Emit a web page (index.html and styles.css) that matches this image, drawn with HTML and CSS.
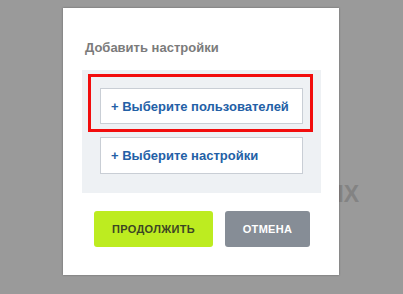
FILE: index.html
```html
<!DOCTYPE html>
<html lang="ru">
<head>
<meta charset="utf-8">
<link rel="stylesheet" href="styles.css">
</head>
<body>
<div class="page">
  <div class="page-heading">ДАННЫХ</div>
</div>
<div class="modal">
  <div class="modal-title">Добавить настройки</div>
  <div class="panel">
    <button class="pick">+ Выберите пользователей</button>
    <button class="pick">+ Выберите настройки</button>
  </div>
  <div class="actions">
    <button class="btn btn-go">ПРОДОЛЖИТЬ</button>
    <button class="btn btn-cancel">ОТМЕНА</button>
  </div>
  <div class="highlight"></div>
</div>
</body>
</html>
```
FILE: styles.css
```css
html, body {
  margin: 0;
  padding: 0;
}
body {
  width: 403px;
  height: 294px;
  overflow: hidden;
  background: #9a9a9a;
  font-family: "Liberation Sans", Arial, sans-serif;
  position: relative;
}
.page {
  display: flex;
  justify-content: flex-end;
  padding: 181px 44px 0 0;
}
.page-heading {
  font-size: 23px;
  font-weight: bold;
  color: #838383;
  line-height: 26px;
}
.modal {
  position: absolute;
  left: 63px;
  top: 8px;
  width: 276px;
  height: 267px;
  box-sizing: border-box;
  background: #fff;
  box-shadow: 0 0 2px rgba(0,0,0,0.35);
  padding: 32px 18px 0 19px;
  display: flex;
  flex-direction: column;
}
.modal-title {
  font-size: 13px;
  font-weight: bold;
  color: #7b7b7b;
  line-height: 16px;
  padding-left: 3px;
}
.panel {
  margin-top: 14px;
  background: #eef1f4;
  padding: 18px 18px 19px 18px;
  display: flex;
  flex-direction: column;
  gap: 13px;
}
.pick {
  height: 36px;
  box-sizing: border-box;
  border: 1px solid #c9ced5;
  background: #fff;
  text-align: left;
  padding: 0 0 0 10px;
  font-family: "Liberation Sans", Arial, sans-serif;
  font-size: 13px;
  font-weight: bold;
  color: #2360a6;
  margin: 0;
}
.pick + .pick {
  height: 37px;
}
.actions {
  margin-top: 18px;
  display: flex;
  gap: 12px;
  padding-left: 12px;
}
.btn {
  height: 36px;
  border: none;
  border-radius: 3px;
  font-family: "Liberation Sans", Arial, sans-serif;
  font-size: 11px;
  font-weight: bold;
  letter-spacing: 0.3px;
  margin: 0;
  padding: 0;
}
.btn-go {
  width: 119px;
  background: #bdec20;
  color: #3c4624;
}
.btn-cancel {
  width: 85px;
  background: #868d96;
  color: #fff;
}
.highlight {
  position: absolute;
  left: 25px;
  top: 66px;
  width: 225px;
  height: 58px;
  box-sizing: border-box;
  border: 3px solid #f20d0d;
}
```
